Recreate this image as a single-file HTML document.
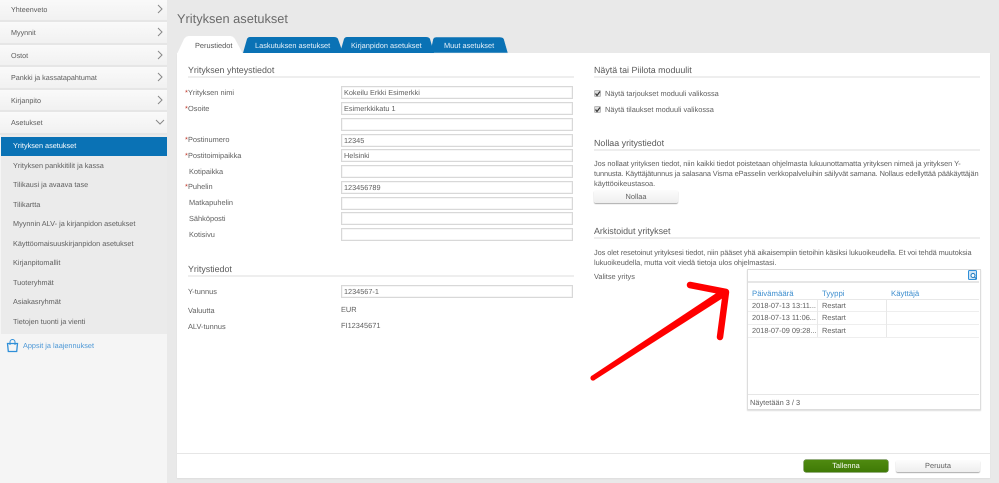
<!DOCTYPE html>
<html><head><meta charset="utf-8"><style>
html,body{margin:0;padding:0}
body{width:999px;height:483px;overflow:hidden;position:relative;background:#e9e9e9;font-family:"Liberation Sans",sans-serif;font-size:7.4px;color:#606060;text-rendering:geometricPrecision}
.a{position:absolute;white-space:nowrap}
.t{position:absolute;white-space:nowrap;line-height:12px}
.m{position:absolute;left:0;width:167px;height:21px;background:linear-gradient(#fafafa,#f1f1f1);border-bottom:2px solid #e6e6e6}
.m span{position:absolute;left:11px;top:5px;line-height:12px;color:#5c5c5c;font-size:7.2px}
.m svg{position:absolute;left:157px;top:5px}
.s{position:absolute;left:13px;line-height:12px;color:#5e5e5e;white-space:nowrap;font-size:7.3px}
.i{position:absolute;left:341px;width:232px;height:13px;box-sizing:border-box;border:1px solid #d8d8d8;box-shadow:inset 0 0 0 .5px #eee;background:#fff;padding:0 0 0 2px;line-height:12px;color:#606060;font-size:7.3px}
.h{position:absolute;font-size:8.9px;line-height:14px;color:#5a5a5a;white-space:nowrap}
.l{position:absolute;height:2px;background:#eee}
.r{color:#c0392b;position:absolute;left:185px;line-height:12px}
</style></head><body>
<div class="a" style="left:0;top:0;width:167px;height:483px;background:#f5f5f5"></div>
<div class="m" style="top:-1px"><span style="top:5px">Yhteenveto</span><svg width="6" height="10"><path d="M1 1l4 4-4 4" fill="none" stroke="#888"/></svg></div>
<div class="m" style="top:22px;height:20.5px"><span>Myynnit</span><svg width="6" height="10"><path d="M1 1l4 4-4 4" fill="none" stroke="#888"/></svg></div>
<div class="m" style="top:44.5px;height:20.5px"><span>Ostot</span><svg width="6" height="10"><path d="M1 1l4 4-4 4" fill="none" stroke="#888"/></svg></div>
<div class="m" style="top:67px;height:20.5px"><span>Pankki ja kassatapahtumat</span><svg width="6" height="10"><path d="M1 1l4 4-4 4" fill="none" stroke="#888"/></svg></div>
<div class="m" style="top:89.5px;height:20.5px"><span>Kirjanpito</span><svg width="6" height="10"><path d="M1 1l4 4-4 4" fill="none" stroke="#888"/></svg></div>
<div class="m" style="top:112px;height:20.5px"><span>Asetukset</span><svg style="left:155px;top:7px" width="10" height="6"><path d="M1 1l4 4 4-4" fill="none" stroke="#888"/></svg></div>
<div class="a" style="left:1px;top:135px;width:166px;height:199px;background:#ebebeb"></div>
<div class="a" style="left:1px;top:137px;width:166px;height:19px;background:#0a72b5"></div>
<div class="s" style="top:140px;color:#fff">Yrityksen asetukset</div>
<div class="s" style="top:160px">Yrityksen pankkitilit ja kassa</div>
<div class="s" style="top:179px">Tilikausi ja avaava tase</div>
<div class="s" style="top:199px">Tilikartta</div>
<div class="s" style="top:218px">Myynnin ALV- ja kirjanpidon asetukset</div>
<div class="s" style="top:238px">Käyttöomaisuuskirjanpidon asetukset</div>
<div class="s" style="top:257px">Kirjanpitomallit</div>
<div class="s" style="top:277px">Tuoteryhmät</div>
<div class="s" style="top:296px">Asiakasryhmät</div>
<div class="s" style="top:316px">Tietojen tuonti ja vienti</div>
<svg class="a" style="left:6px;top:339px" width="13" height="14"><path d="M1.5 4.5h10l-.8 8h-8.4z" fill="none" stroke="#2f8fd8" stroke-width="1.3"/><path d="M4 6V3a2.5 2.5 0 0 1 5 0v3" fill="none" stroke="#2f8fd8"/></svg>
<div class="s" style="left:23px;top:340px;color:#4b97d6">Appsit ja laajennukset</div>

<div class="a" style="left:177px;top:8px;font-size:12.8px;line-height:22px;color:#6a6a6a">Yrityksen asetukset</div>

<div class="a" style="left:177px;top:53px;width:813px;height:425px;background:#fff;box-shadow:0 1px 1px #ddd"></div>
<svg class="a" style="left:175px;top:30px" width="340" height="24">
<path d="M255 23l3-14q1-2 3-2h64q3 0 4 2l4 14z" fill="#0a72b5" stroke="#e9e9e9" stroke-width=".5"/>
<path d="M165 23l4-14q1-2 3-2h79q3 0 4 2l4 14z" fill="#0a72b5"/>
<path d="M68 23l4-14q1-2 3-2h84q3 0 4 2l5 14z" fill="#0a72b5"/>
<path d="M2 24l7-15q2-3 5-3h41q3 0 5 3l8 15z" fill="#fff"/>
</svg>
<div class="t" style="left:195px;top:39.5px;color:#555">Perustiedot</div>
<div class="t" style="left:255px;top:39.5px;color:#e8f2fa">Laskutuksen asetukset</div>
<div class="t" style="left:351px;top:39.5px;color:#e8f2fa">Kirjanpidon asetukset</div>
<div class="t" style="left:444px;top:39.5px;color:#e8f2fa">Muut asetukset</div>

<div class="h" style="left:188px;top:63px">Yrityksen yhteystiedot</div><div class="l" style="left:188px;top:76px;width:386px"></div>
<div class="r" style="top:87px">*</div><div class="t" style="left:188px;top:87px">Yrityksen nimi</div><div class="i" style="top:86px">Kokeilu Erkki Esimerkki</div>
<div class="r" style="top:103px">*</div><div class="t" style="left:188px;top:103px">Osoite</div><div class="i" style="top:102px">Esimerkkikatu 1</div>
<div class="i" style="top:118px"></div>
<div class="r" style="top:134px">*</div><div class="t" style="left:188px;top:134px">Postinumero</div><div class="i" style="top:134px">12345</div>
<div class="r" style="top:150px">*</div><div class="t" style="left:188px;top:150px">Postitoimipaikka</div><div class="i" style="top:149px">Helsinki</div>
<div class="t" style="left:189px;top:166px">Kotipaikka</div><div class="i" style="top:165px"></div>
<div class="r" style="top:181px">*</div><div class="t" style="left:188px;top:181px">Puhelin</div><div class="i" style="top:181px">123456789</div>
<div class="t" style="left:189px;top:197px">Matkapuhelin</div><div class="i" style="top:197px"></div>
<div class="t" style="left:189px;top:213px">Sähköposti</div><div class="i" style="top:212px"></div>
<div class="t" style="left:189px;top:229px">Kotisivu</div><div class="i" style="top:228px"></div>
<div class="h" style="left:188px;top:262px">Yritystiedot</div><div class="l" style="left:188px;top:275px;width:386px"></div>
<div class="t" style="left:188px;top:286px">Y-tunnus</div><div class="i" style="top:285px">1234567-1</div>
<div class="t" style="left:188px;top:305px">Valuutta</div><div class="t" style="left:341px;top:304px">EUR</div>
<div class="t" style="left:188px;top:321px">ALV-tunnus</div><div class="t" style="left:341px;top:320px">FI12345671</div>

<div class="h" style="left:594px;top:63px">Näytä tai Piilota moduulit</div><div class="l" style="left:594px;top:76px;width:386px"></div>
<svg class="a" style="left:594px;top:90px" width="8" height="26"><rect x=".5" y=".5" width="6" height="6" rx="1" fill="#ddd" stroke="#bbb"/><path d="M1.5 3.5l1.5 2 3-4" fill="none" stroke="#333" stroke-width="1.2"/><rect x=".5" y="16.5" width="6" height="6" rx="1" fill="#ddd" stroke="#bbb"/><path d="M1.5 19.5l1.5 2 3-4" fill="none" stroke="#333" stroke-width="1.2"/></svg>
<div class="t" style="left:605px;top:87.5px">Näytä tarjoukset moduuli valikossa</div>
<div class="t" style="left:605px;top:103.5px">Näytä tilaukset moduuli valikossa</div>
<div class="h" style="left:594px;top:136px">Nollaa yritystiedot</div><div class="l" style="left:594px;top:149px;width:386px"></div>
<div class="t" style="left:594px;top:157.5px;letter-spacing:-.05px">Jos nollaat yrityksen tiedot, niin kaikki tiedot poistetaan ohjelmasta lukuunottamatta yrityksen nimeä ja yrityksen Y-</div>
<div class="t" style="left:594px;top:167.5px;letter-spacing:-.11px">tunnusta. Käyttäjätunnus ja salasana Visma ePasselin verkkopalveluihin säilyvät samana. Nollaus edellyttää pääkäyttäjän</div>
<div class="t" style="left:594px;top:177.5px">käyttöoikeustasoa.</div>
<div class="a" style="left:594px;top:190px;width:84px;height:13px;border-radius:2px;background:linear-gradient(#fcfcfc,#eee);box-shadow:0 1px 1px #aaa;text-align:center;line-height:13px">Nollaa</div>

<div class="h" style="left:594px;top:224px">Arkistoidut yritykset</div><div class="l" style="left:594px;top:237px;width:386px"></div>
<div class="t" style="left:594px;top:246.5px;letter-spacing:-.09px">Jos olet resetoinut yrityksesi tiedot, niin pääset yhä aikaisempiin tietoihin käsiksi lukuoikeudella. Et voi tehdä muutoksia</div>
<div class="t" style="left:594px;top:256.5px;letter-spacing:-.05px">lukuoikeudella, mutta voit viedä tietoja ulos ohjelmastasi.</div>
<div class="t" style="left:594px;top:270.5px">Valitse yritys</div>
<div class="a" style="left:747px;top:269px;width:232px;height:139px;border:1px solid #ddd;box-shadow:0 1px 1px #ddd;background:#fff"></div>
<div class="a" style="left:748px;top:281px;width:231px;height:2px;background:#e6e6e6"></div>
<svg class="a" style="left:968px;top:270px" width="10" height="11"><rect x=".5" y=".5" width="8" height="9" rx="1" fill="#cfe4f5" stroke="#2f8fd8"/><circle cx="5" cy="5.5" r="2" fill="#fff" stroke="#1b78bd"/><path d="M6.5 7l2 2" stroke="#1b78bd"/></svg>
<div class="t" style="left:752px;top:287.5px;color:#3f8fcf;font-size:7.8px">Päivämäärä</div>
<div class="t" style="left:822px;top:287.5px;color:#3f8fcf;font-size:7.8px">Tyyppi</div>
<div class="t" style="left:891px;top:287.5px;color:#3f8fcf;font-size:7.8px">Käyttäjä</div>
<div class="a" style="left:748px;top:299px;width:231px;height:1px;background:#e8e8e8"></div>
<div class="a" style="left:748px;top:311px;width:231px;height:1px;background:#eee"></div>
<div class="a" style="left:748px;top:324px;width:231px;height:1px;background:#eee"></div>
<div class="a" style="left:748px;top:337px;width:231px;height:1px;background:#eee"></div>
<div class="a" style="left:817px;top:300px;width:1px;height:37px;background:#e8e8e8"></div>
<div class="a" style="left:886px;top:300px;width:1px;height:37px;background:#e8e8e8"></div>
<div class="t" style="left:752px;top:300px">2018-07-13 13:11...</div><div class="t" style="left:822px;top:300px">Restart</div>
<div class="t" style="left:752px;top:312px">2018-07-13 11:06...</div><div class="t" style="left:822px;top:312px">Restart</div>
<div class="t" style="left:752px;top:325px">2018-07-09 09:28...</div><div class="t" style="left:822px;top:325px">Restart</div>
<div class="a" style="left:748px;top:394px;width:231px;height:1px;background:#e6e6e6"></div>
<div class="t" style="left:750px;top:397px">Näytetään 3 / 3</div>

<svg class="a" style="left:580px;top:270px" width="150" height="120"><path d="M11.6 105.9L142.8 18.7 147.2 25.3 14.4 110.1z" fill="#f00"/><circle cx="13" cy="108" r="2.6" fill="#f00"/><path d="M110 15L146 22 140 67" stroke="#f00" stroke-width="6.5" stroke-linecap="round" stroke-linejoin="round" fill="none"/></svg>

<div class="a" style="left:177px;top:453px;width:813px;height:1px;background:#e6e6e6"></div>
<div class="a" style="left:804px;top:460px;width:84px;height:12px;border-radius:2px;background:linear-gradient(#4f8a10,#3f7a06);box-shadow:0 0 0 .5px #2f5f04;color:#fff;text-align:center;line-height:12px">Tallenna</div>
<div class="a" style="left:896px;top:460px;width:84px;height:12px;border-radius:2px;background:linear-gradient(#fdfdfd,#eee);box-shadow:0 1px 1px #aaa;text-align:center;line-height:12px">Peruuta</div>
</body></html>
